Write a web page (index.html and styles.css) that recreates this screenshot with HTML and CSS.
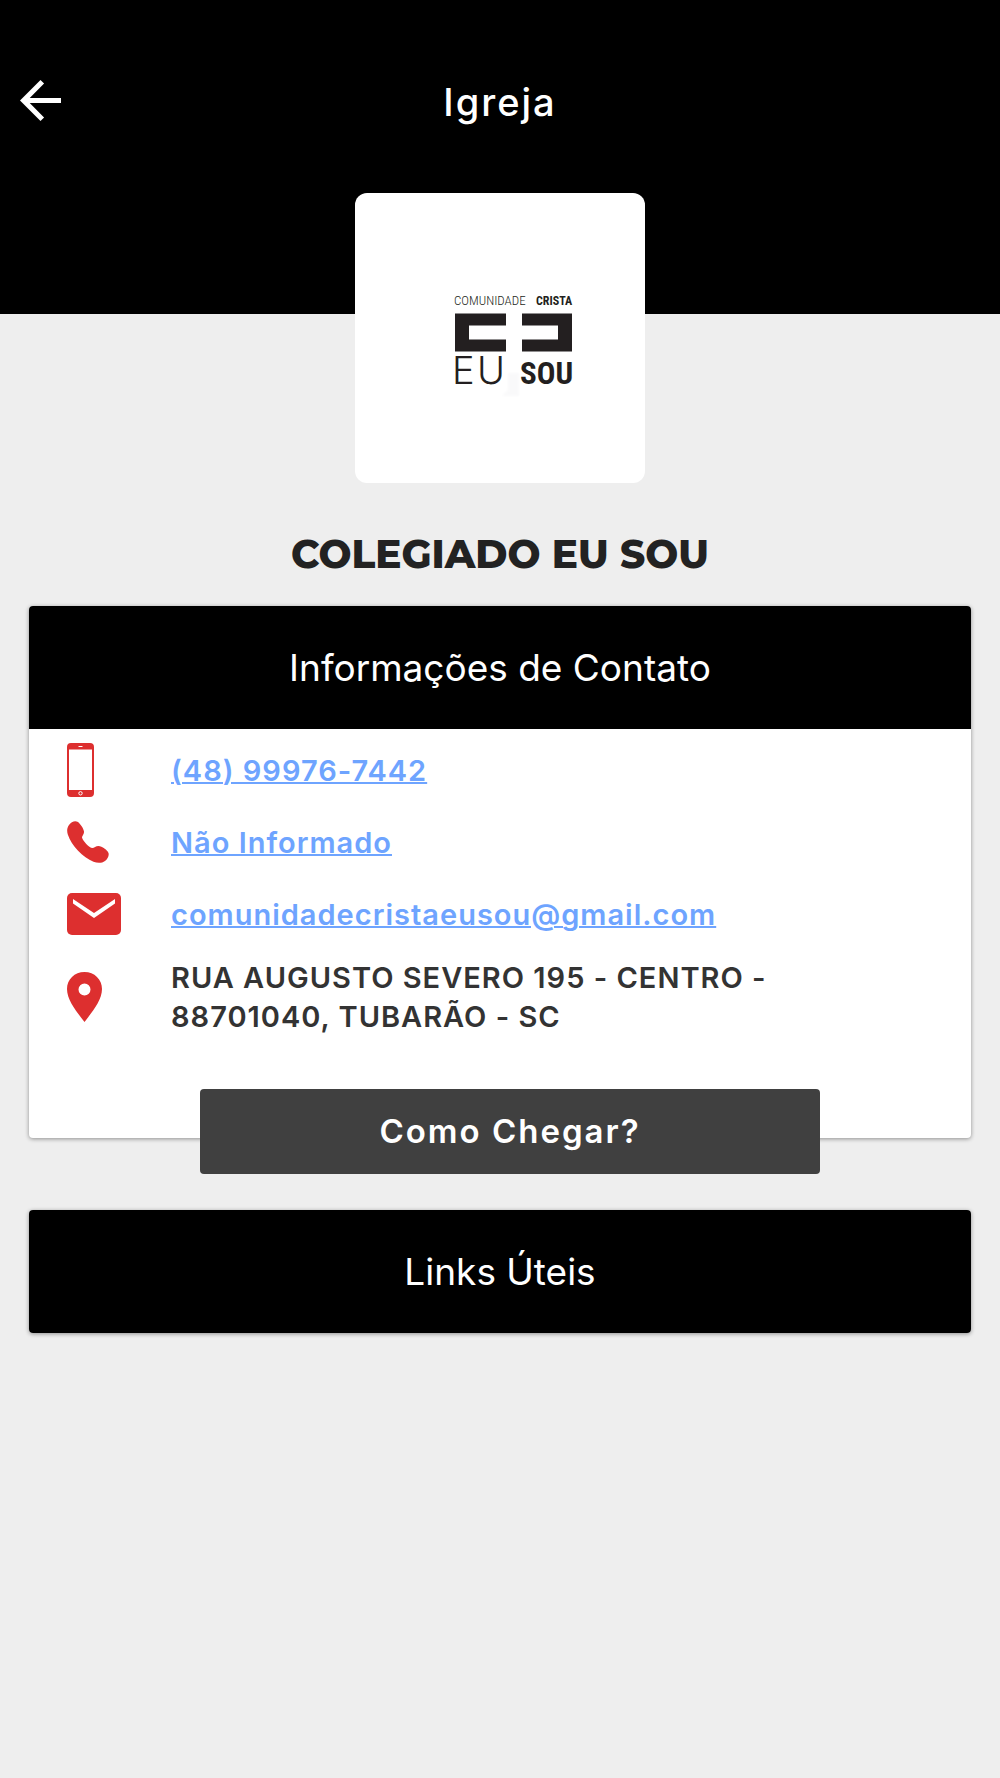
FILE: index.html
```html
<!DOCTYPE html>
<html lang="pt-BR">
<head>
<meta charset="utf-8">
<meta name="viewport" content="width=device-width, initial-scale=1">
<title>Igreja</title>
<link rel="stylesheet" href="styles.css">
</head>
<body>
<header class="topbar">
  <button class="back" type="button" aria-label="Voltar">
    <svg width="41" height="41" viewBox="0 0 40 40" aria-hidden="true"><path d="M0 20 20 0l3.500 3.500L9.500 17.500H40v5H9.500l14 14L20 40Z" fill="#fff"/></svg>
  </button>
  <h1 class="title">Igreja</h1>
</header>
<main class="content">
  <div class="logo-card">
    <svg class="logo" viewBox="0 0 290 290" role="img" aria-label="Comunidade Crista Eu Sou">
      <defs><filter id="soft"><feGaussianBlur stdDeviation="1"/></filter></defs>
      <path d="M153 180h11v23h-17l6-6Z" fill="#f9f9fa" filter="url(#soft)"/>
      <text class="logo-thin" x="99" y="112">COMUNIDADE</text>
      <text class="logo-strong" x="181" y="112">CRISTA</text>
      <path d="M100 120.500h51v12h-37v14h37v12h-51ZM167 120.500h50v38h-50v-12h36v-14h-36Z" fill="#231f20"/>
      <text class="logo-eu" x="97 122" y="191">EU</text>
      <text class="logo-sou" x="165" y="191">SOU</text>
    </svg>
  </div>
  <h2 class="name">COLEGIADO EU SOU</h2>
  <section class="panel">
    <h3 class="panel-title">Informações de Contato</h3>
    <ul class="contacts">
      <li class="contact">
        <span class="icon"><svg width="27" height="54" viewBox="0 0 27 54" aria-hidden="true"><path fill="#dd2f2f" fill-rule="evenodd" d="M4 0h19a4 4 0 0 1 4 4v46a4 4 0 0 1-4 4H4a4 4 0 0 1-4-4V4a4 4 0 0 1 4-4ZM2 6.500v40.500h23V6.500Z"/><path d="M11.500 3.500h4" stroke="#fff" stroke-width="1"/><circle cx="13.500" cy="50.300" r="1.700" fill="none" stroke="#fff"/></svg></span>
        <a href="tel:+5548999767442">(48) 99976-7442</a>
      </li>
      <li class="contact">
        <span class="icon"><svg width="42" height="42" viewBox="0 0 42 42" aria-hidden="true"><path fill="#dd2f2f" d="M2 4C4 1 8-.8 10.500.8c3 2 6 6.700 6.500 9.700.4 2.800-2 4.200-2 6 1 3.500 6.500 9.500 10 10.500 2 .3 3.500-2 6.500-2 3.500.2 9 4 10 7 .8 2.800-1 6-3.500 8-3 2.300-7.500 2.300-11.500.8C16 36.500 4.500 25 .8 13.500-.3 9.800 0 6.700 2 4Z"/></svg></span>
        <a href="#telefone">Não Informado</a>
      </li>
      <li class="contact">
        <span class="icon"><svg width="54" height="42" viewBox="0 0 54 42" aria-hidden="true"><rect width="54" height="42" rx="5" fill="#dd2f2f"/><path d="M6 6 27 20 48 6v4.500L27 25 6 10.500Z" fill="#fff"/></svg></span>
        <a href="mailto:comunidadecristaeusou@gmail.com">comunidadecristaeusou@gmail.com</a>
      </li>
      <li class="contact contact-address">
        <span class="icon"><svg width="35" height="50" viewBox="0 0 35 50" aria-hidden="true"><path fill="#dd2f2f" fill-rule="evenodd" d="M17.500 0C27.500 0 35 7.500 35 17c0 11-9 22-17.500 33C9 39 0 28 0 17 0 7.500 7.500 0 17.500 0Zm0 11.500a6 6 0 1 0 0 12 6 6 0 0 0 0-12Z"/></svg></span>
        <address>RUA AUGUSTO SEVERO 195 - CENTRO - 88701040, TUBARÃO - SC</address>
      </li>
    </ul>
  </section>
  <button class="directions" type="button">Como Chegar?</button>
  <section class="panel">
    <h3 class="panel-title">Links Úteis</h3>
  </section>
</main>
</body>
</html>
```
FILE: styles.css
```css
* {
  box-sizing: border-box;
}

body {
  margin: 0;
  min-height: 100vh;
  background: #eee;
  color: #333;
  font-family: Inter, "Liberation Sans", sans-serif;
}

h1, h2, h3, ul {
  margin: 0;
  padding: 0;
}

button {
  border: 0;
  font-family: inherit;
  cursor: pointer;
}

.topbar {
  display: grid;
  grid-template-columns: 60px 1fr 60px;
  align-items: start;
  padding: 80px 20px 0;
  height: 314px;
  background: #000;
}

.back {
  display: flex;
  padding: 0;
  background: none;
}

.title {
  color: #fff;
  font-size: 38px;
  line-height: 44px;
  font-weight: 500;
  letter-spacing: 2px;
  text-align: center;
}

.content {
  display: flex;
  flex-direction: column;
  padding: 0 29px 40px;
}

.logo-card {
  align-self: center;
  width: 290px;
  margin-top: -121px;
  border-radius: 12px;
  background: #fff;
}

.logo {
  display: block;
  width: 100%;
  fill: #231f20;
  font-family: "Liberation Sans Narrow", "Roboto Condensed", Roboto, sans-serif;
}

.logo-thin {
  font-size: 13px;
  font-weight: 300;
}

.logo-strong {
  font-size: 12px;
  font-weight: 700;
}

.logo-eu {
  font-family: Inter, sans-serif;
  font-size: 38px;
  font-weight: 300;
}

.logo-sou {
  font-size: 31px;
  font-weight: 700;
}

.name {
  margin: 48px 0 29px;
  color: #222;
  font-family: Montserrat, Inter, sans-serif;
  font-size: 39px;
  line-height: 46px;
  font-weight: 800;
  text-align: center;
}

.panel {
  border-radius: 4px;
  background: #fff;
  box-shadow: 0 1px 4px rgba(0, 0, 0, 0.4);
  overflow: hidden;
}

.panel-title {
  padding: 38px 16px;
  background: #000;
  color: #fff;
  font-size: 37px;
  line-height: 47px;
  font-weight: 400;
  text-align: center;
}

.contacts {
  padding: 5px 38px 94px;
  list-style: none;
}

.contact {
  display: grid;
  grid-template-columns: 104px 1fr;
  align-items: center;
  min-height: 72px;
  font-size: 29px;
  line-height: 39px;
  font-weight: 600;
  letter-spacing: 1px;
}

.contact-address {
  padding: 8px 100px 8px 0;
}

.icon {
  display: flex;
}

.contact a {
  justify-self: start;
  color: #6ea4ff;
  text-decoration-thickness: 2px;
}

.contact address {
  font-style: normal;
}

.directions {
  position: relative;
  width: 66%;
  max-width: 620px;
  margin: -49px 0 36px 171px;
  padding: 20px;
  border-radius: 4px;
  background: #404040;
  color: #fff;
  font-size: 33px;
  line-height: 45px;
  font-weight: 600;
  letter-spacing: 2px;
}
```
